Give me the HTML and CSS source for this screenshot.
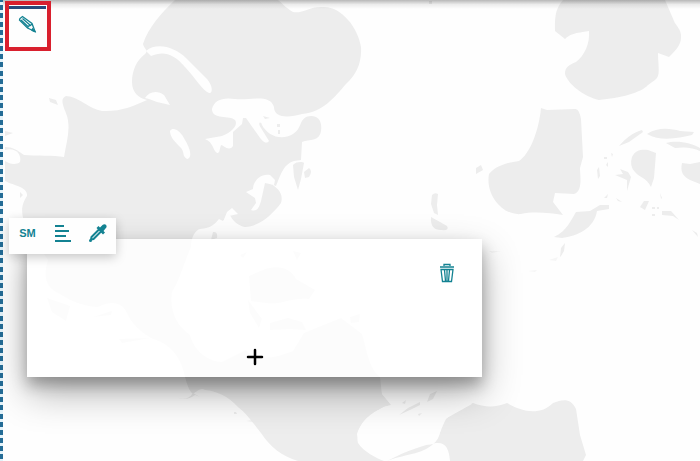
FILE: index.html
```html
<!DOCTYPE html>
<html lang="en">
<head>
<meta charset="utf-8">
<meta name="viewport" content="width=device-width, initial-scale=1">
<title>Section editor</title>
<link rel="stylesheet" href="styles.css">
</head>
<body>
<main class="section">
  <svg class="map" viewBox="0 0 700 461" preserveAspectRatio="xMinYMin slice" aria-hidden="true">
    <g class="land">
      <path d="M175 0 C162 12 148 28 143 44 C144 49 149 50 145 54 C137 60 132 70 132 82 C132 92 138 98 147 100 C134 106 120 112 102 111 C89 109 80 97 66 96 C59 99 64 107 67 116 C71 130 66 144 64 157 C54 155 35 156 24 155 C17 150 13 147 5 147 L5 181 C15 186 28 187 27 196 C20 207 22 213 24 222 L48 260 C43 276 45 288 60 294 C72 302 87 307 98 307 C112 300 122 302 127 313 C131 323 141 333 153 339 C166 343 180 352 185 377 C187 384 189 391 193 394 C197 391 201 387 205 390 C216 391 228 396 238 407 C247 414 253 423 261 433 C270 447 282 456 298 461 L384 461 C376 458 364 452 358 443 C355 431 363 417 380 409 C386 405 390 406 392 405 L382 394 L380 377 C368 367 367 350 362 334 L341 318 L304 333 L293 351 C278 357 256 363 246 350 L222 362 C206 361 194 350 190 335 C177 326 169 311 172 292 C180 279 184 263 191 247 C191 236 196 230 200 229 C210 228 213 226 219 219 L223 221 L229 213 C232 221 239 226 245 227 C262 226 274 212 281 203 C284 193 277 187 269 183 L276 186 C280 177 283 164 294 161 L301 160 L302 142 C310 139 319 142 321 131 C323 117 314 114 306 117 C299 121 302 128 293 134 C281 141 268 136 262 125 C261 121 257 122 261 128 L269 141 C266 145 262 141 258 135 L246 118 L243 118 L242 124 L233 132 L233 146 C229 152 223 145 221 145 C219 151 220 153 217 153 C212 149 214 143 205 139 L222 136 C234 131 238 124 235 120 C230 115 212 120 212 109 C214 100 223 97 235 99 C249 101 270 93 274 107 C274 118 288 118 302 114 C323 112 334 98 346 84 C356 75 362 63 361 47 C358 28 342 7 324 7 C309 6 303 14 293 12 C286 8 282 3 278 0 Z"/>
      <path class="water" d="M146 51 C157 42 174 47 186 58 L207 79 C213 86 213 94 209 93 C203 91 196 79 185 67 C173 53 163 51 151 56 Z M145 98 C149 91 158 90 164 95 L170 105 L157 102 L149 99 Z M170 131 C173 126 181 131 185 140 C190 148 193 158 187 159 C181 155 186 152 179 146 C173 140 170 136 170 131 Z"/>
      <path class="water" d="M246 192 L253 189 C253 181 261 173 270 175 L275 180 L274 185 L265 183 L261 201 C259 208 257 212 251 210 L256 203 L255 198 Z M223 222 L227 212 L232 208 L238 214 L229 216 L234 222 Z"/>
      <path class="water" d="M5 150 C14 147 22 153 20 162 C15 166 8 163 5 161 Z"/>
      <path d="M49 98 L56 100 L58 105 L50 102 Z M5 131 L13 133 L5 136 Z M20 192 L23 195 L20 198 Z M263 116 L270 118 L265 119 Z M277 124 h3 v3 h-3 Z M278 130 h2 v4 h-2 Z M293 165 C297 161 303 162 304 163 L301 179 L298 190 L294 177 Z M304 172 L309 168 Q313 171 309 177 L305 178 Z M213 232 Q218 231 217 238 L211 240 Z M429 1 h3 v3 h-3 Z"/>
      <path d="M432 195 Q435 192 438 194 L437 205 L438 215 L434 213 L431 204 Z M431 217 L440 222 L447 226 Q450 231 441 230 Q430 230 431 217 Z M476 168 L481 165 L483 170 L476 174 Z"/>
      <path d="M563 0 C554 10 555 21 555 31 L565 39 C570 34 575 33 589 31 C590 43 585 55 576 62 C569 65 565 67 565 74 C568 84 583 96 599 100 C620 98 641 93 648 85 L655 80 C661 76 658 66 658 53 L669 57 C675 51 681 45 681 38 C682 29 675 25 674 21 L665 0 Z"/>
      <path d="M541 108 C539 130 530 154 519 161 C503 163 494 168 489 174 C485 195 503 216 521 214 C533 211 551 213 563 215 L553 202 L555 193 L574 194 C583 192 580 175 580 168 L583 157 L581 119 Q579 108 575 109 L547 110 Z"/>
      <path d="M554 237 L562 238 C577 236 594 229 597 211 L609 209 L609 205 L600 205 L590 211 L576 212 C571 220 567 231 554 237 Z M619 146 C625 139 632 133 642 130 L643 132 L629 142 Z M647 134 C657 127 670 128 680 131 L694 132 L692 135 C679 138 661 142 647 134 Z M666 143 C677 140 692 143 700 148 L700 151 Q690 146 675 148 Z M632 157 C635 150 642 149 648 150 L656 153 L654 178 L651 187 C646 177 640 178 635 172 Q629 166 632 157 Z M682 163 L690 164 L700 162 L700 184 L690 180 C683 176 680 172 682 163 Z"/>
      <path d="M615 175 L623 174 L620 169 L628 172 L631 177 L627 191 L627 180 Z M597 170 l2 -3 l1 9 l-2 3 Z M604 157 h3 v2 h-3 Z M611 153 l2 1 l-1 3 Z M606 165 l2 -3 v5 Z M604 198 l4 -4 l-1 4 Z M616 198 l6 4 l-4 -1 Z M640 207 L644 201 L649 201 L645 210 Z M652 207 h3 v2 h-3 Z M657 207 h2 v2 h-2 Z M652 214 h3 v2 h-3 Z M662 211 L671 211 L679 220 L673 216 L662 215 Z M660 193 l2 5 l-1 1 Z M692 230 l5 3 l1 4 Z M560 257 l1 -9 l4 -5 l-1 8 l-3 5 Z"/>
      <path class="faint" d="M549 260 l9 -3 l-2 4 Z M528 271 l9 -1 l-2 2 Z M489 251 l12 0 l-9 2 Z"/>
      <path d="M249 276 L263 270 C277 264 291 268 296 279 L315 290 L309 299 C291 297 283 305 266 303 L251 301 Z M240 255 l7 -3 l-4 6 Z M293 251 l8 2 l-4 7 Z M248 300 l14 19 l-3 9 l-9 -15 Z M270 323 L288 318 L302 322 L306 330 L290 329 L270 330 Z M350 317 l10 -3 l-1 8 l-8 1 Z M47 298 L70 306 L66 321 L52 312 Z M93 317 L112 311 L111 315 Z M119 339 L150 338 L122 343 Z"/>
      <path d="M387 461 C401 455 424 454 433 444 C439 439 441 428 446 419 C456 410 465 406 473 403 C484 407 495 408 507 403 C522 412 540 416 553 403 C563 399 571 398 576 409 L580 435 L586 455 L583 461 L450 461 C449 449 446 442 436 443 C424 445 408 450 387 461 Z"/>
      <path class="water" d="M391 405 C382 407 362 417 357 434 C359 445 369 456 376 455 C385 451 386 436 391 432 C397 438 394 445 405 441 C416 435 424 447 433 444 C442 438 439 427 445 419 L472 404 L461 390 L440 377 L381 377 L382 394 Z"/>
      <path d="M399 415 L408 408 L420 402 L420 405 L412 409 Z M427 402 L430 394 L437 391 L433 399 Z M418 414 l4 -1 l-3 3 Z M402 403 l4 -3 l-1 4 Z M176 397 Q187 402 193 393 L200 397 L195 395 Q186 402 176 397 Z M234 412 h2 l1 2 h-3 Z M246 421 l8 -1 l2 2 Z"/>
    </g>
  </svg>
  <button class="edit" type="button" aria-label="Edit section">
    <svg class="pencil" viewBox="0 0 20 20" aria-hidden="true">
      <path d="M2 3.500 L4.500 1.500 L14 8.500 L17 16.500 L9.500 13 L1.500 5 Z"/>
      <path d="M3 5 L10.500 12 M4.500 3.500 L12.500 10.500 M9.500 13 L10.500 11 L12.500 10.500 L14 9"/>
      <path class="solid" d="M14.500 14 L17.500 17 L14 15.500 Z"/>
    </svg>
  </button>
  <section class="card">
    <div class="toolbar" role="toolbar" aria-label="Block settings">
      <button class="tool" type="button">SM</button>
      <button class="tool" type="button" aria-label="Align left">
        <svg class="align" viewBox="0 0 18 18" aria-hidden="true"><path d="M1 2H10M1 7H15M1 12H12M1 17H17"/></svg>
      </button>
      <button class="tool" type="button" aria-label="Pick colour">
        <svg class="dropper" viewBox="0 0 20 20" aria-hidden="true">
          <path d="M11 6.500 L3.500 14 L3 16.500 L5.500 16 L13 8.500"/>
          <path class="solid" d="M8.500 5 L10.500 3 L12 4.500 L14.500 2 Q16.500 .5 18.200 2 Q19.500 4 17.500 5.500 L15.500 8 L17 9.500 L15 11.500 Z"/>
          <circle class="solid" cx="2.500" cy="17.500" r="1.500"/>
        </svg>
      </button>
    </div>
    <button class="delete" type="button" aria-label="Delete block">
      <svg class="trash" viewBox="0 0 14 20" aria-hidden="true">
        <path d="M4 3 V1.500 H10 V3 M0 4 H14 M1 6.500 H13 L11.500 18.500 H2.500 Z M4.500 7 L5.500 18 M7 7 V18 M9.500 7 L8.500 18"/>
      </svg>
    </button>
    <button class="add" type="button" aria-label="Add block">
      <svg class="plus" viewBox="0 0 18 18" aria-hidden="true"><path d="M9 2V16M2 9H16"/></svg>
    </button>
  </section>
</main>
</body>
</html>
```

FILE: styles.css
```css
* {
  box-sizing: border-box;
}

body {
  margin: 0;
  background: #fefefe;
  font-family: "Liberation Sans", Arial, sans-serif;
}

button {
  margin: 0;
  padding: 0;
  border: 0;
  background: none;
  color: #138292;
  font: inherit;
  cursor: pointer;
}

svg {
  display: block;
  fill: none;
  stroke: currentColor;
}

.section {
  position: relative;
  display: flex;
  flex-direction: column;
  align-items: flex-start;
  min-height: 100vh;
  padding: 1px 5px;
  overflow: hidden;
}

/* Dashed left edge: six dashes to each 49px tile */
.section::before {
  content: "";
  position: absolute;
  inset: 0 auto 0 0;
  width: 3px;
  background: repeating-linear-gradient(#246c96 0 10.5%, #e4f3fa 10.5% 16.6667%) 0 -3px / 3px 49px;
}

/* Shade cast by the bar above */
.section::after {
  content: "";
  position: absolute;
  inset: 0 0 auto 3px;
  height: 9px;
  background: linear-gradient(rgba(0, 0, 0, 0.28), rgba(0, 0, 0, 0.07) 50%, transparent);
}

.map {
  position: absolute;
  inset: 0;
  width: 100%;
  height: 100%;
}

.land {
  fill: #ededed;
  stroke: none;
}

.water {
  fill: #fefefe;
}

.faint {
  fill: #f6f6f6;
}

.edit {
  position: relative;
  z-index: 1;
  display: flex;
  justify-content: center;
  width: 46px;
  height: 50px;
  border: 4px solid #d9202e;
  background: #fefefe;
}

.edit::before {
  content: "";
  position: absolute;
  inset: 1px 1px auto 0;
  height: 3px;
  background: #274b7c;
}

.pencil {
  width: 20px;
  height: 20px;
  margin-top: 10px;
}

.pencil,
.trash {
  stroke-width: 1.3;
}

.solid {
  fill: currentColor;
}

.card {
  position: relative;
  display: flex;
  flex-direction: column;
  width: 66%;
  margin: 188px 0 0 22px;
  padding: 24px 28px 11px;
  background: rgba(255, 255, 255, 0.82);
  box-shadow: 0 16px 36px rgba(0, 0, 0, 0.3), 0 8px 14px rgba(0, 0, 0, 0.28);
}

.toolbar {
  position: absolute;
  top: -21px;
  left: -18px;
  display: flex;
  align-items: flex-start;
  height: 36px;
  padding: 0 1px;
  background: #fefefe;
  box-shadow: 0 3px 10px rgba(0, 0, 0, 0.22);
}

.tool {
  display: flex;
  align-items: center;
  justify-content: center;
  width: 35px;
  height: 30px;
  font-size: 11px;
  font-weight: 700;
}

.align {
  width: 18px;
  height: 18px;
  stroke-width: 2;
}

.dropper {
  width: 20px;
  height: 20px;
  stroke-width: 2;
}

.dropper .solid {
  stroke: none;
}

.delete {
  align-self: flex-end;
}

.trash {
  width: 14px;
  height: 20px;
}

.add {
  align-self: center;
  margin-top: 65px;
  color: #000;
}

.plus {
  width: 18px;
  height: 18px;
  stroke-width: 2.5;
  stroke-linecap: round;
}
```
